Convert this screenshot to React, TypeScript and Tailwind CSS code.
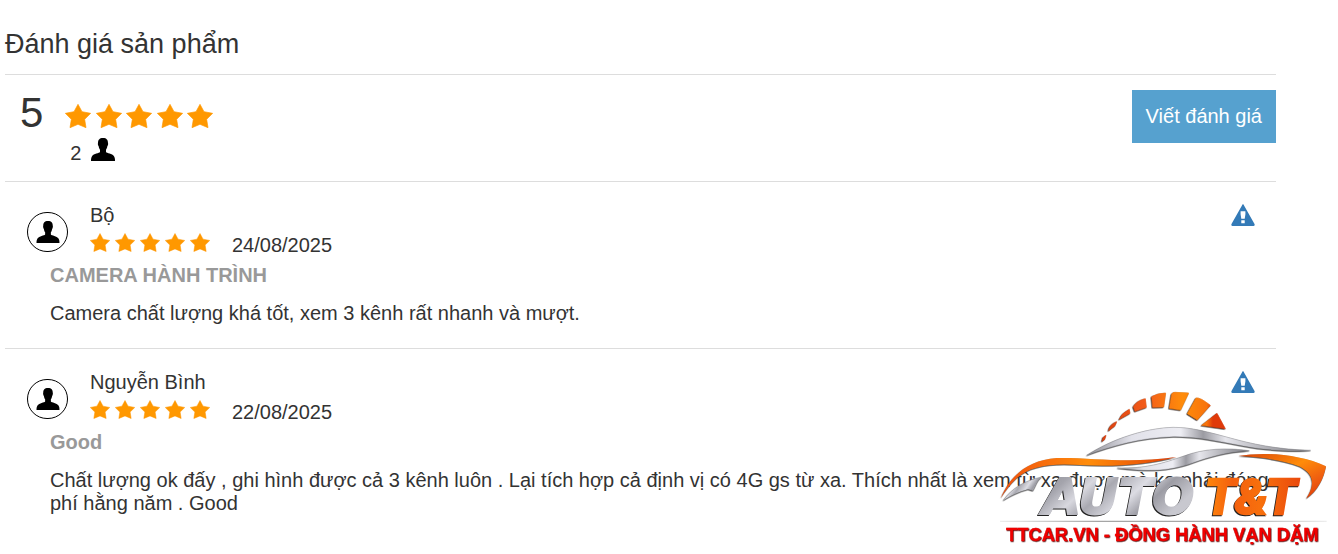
import React from 'react';

interface Review {
  id: number;
  author: string;
  rating: number;
  date: string;
  title: string;
  content: string;
}

const reviews: Review[] = [
  {
    id: 1,
    author: 'Bộ',
    rating: 5,
    date: '24/08/2025',
    title: 'CAMERA HÀNH TRÌNH',
    content: 'Camera chất lượng khá tốt, xem 3 kênh rất nhanh và mượt.',
  },
  {
    id: 2,
    author: 'Nguyễn Bình',
    rating: 5,
    date: '22/08/2025',
    title: 'Good',
    content:
      'Chất lượng ok đấy , ghi hình được cả 3 kênh luôn . Lại tích hợp cả định vị có 4G gs từ xa. Thích nhất là xem từ xa được mà ko phải đóng phí hằng năm . Good',
  },
];

const Star = ({ className }: { className: string }) => (
  <svg viewBox="0 0 78 72" className={className} aria-hidden="true">
    <path
      d="M39 1 L51 23 L77 28 L59 46 L63 71 L39 61 L15 71 L19 46 L1 28 L27 23 Z"
      fill="#ff9800"
      stroke="#ff9800"
      strokeWidth="2"
      strokeLinejoin="round"
    />
  </svg>
);

const Person = ({ className }: { className: string }) => (
  <svg viewBox="0 0 72 69" className={className} aria-hidden="true">
    <path d="M36 0 C25 0 21 6 21 15 C20 17 21 23 23 25 C24 30 25 33 27 35 V42 C25 46 8 46 3 55 C0 60 0 65 0 69 H72 C72 65 72 60 69 55 C64 46 47 46 45 42 V35 C47 33 48 30 49 25 C51 23 52 17 51 15 C51 6 47 0 36 0 Z" />
  </svg>
);

const ReviewItem = ({ review }: { review: Review }) => (
  <article className="border-t border-[#ddd] pt-5 pb-[23px] pl-[22px]">
    <div className="flex items-start pr-[21px]">
      <div className="mt-[10px] flex h-10 w-[41px] shrink-0 items-center justify-center rounded-full border border-black">
        <Person className="h-[22px] w-6" />
      </div>
      <div className="ml-[22px] flex-1">
        <h3 className="text-[20px] leading-[27px]">{review.author}</h3>
        <div className="flex items-center pt-px">
          <div className="mb-[6px] flex gap-[5px]" role="img" aria-label={`${review.rating} sao`}>
            {Array.from({ length: review.rating }, (_, i) => (
              <Star key={i} className="h-[19px] w-5" />
            ))}
          </div>
          <time className="ml-[22px] text-[20px] leading-[30px]">{review.date}</time>
        </div>
      </div>
      <a href="#report" aria-label="Báo cáo vi phạm" className="mt-[2px]">
        <svg viewBox="0 0 70 64" className="h-[22px] w-6" aria-hidden="true">
          <path d="M35 1 Q37 1 38 4 L69 59 Q70 64 66 64 H4 Q0 64 1 59 L32 4 Q33 1 35 1 Z" fill="#337ab7" />
          <path d="M28 21 H42 V30 L40 43 H30 L28 30 Z M30 47 H40 V56 H30 Z" fill="#fff" />
        </svg>
      </a>
    </div>
    <div className="pl-[23px]">
      <h4 className="text-[20px] font-bold leading-[30px] text-[#999]">{review.title}</h4>
      <p className="mt-[12px] text-[20px] leading-[23px]">{review.content}</p>
    </div>
  </article>
);

const AutoLogo = () => (
  <svg
    viewBox="54 48 1002 504"
    className="pointer-events-none absolute right-1.5 bottom-0 h-[168px] w-[334px]"
    role="img"
    aria-label="Auto T&T"
  >
    <defs>
      <linearGradient id="flame" x1="0" y1="0" x2="1" y2="0">
        <stop offset="0" stopColor="#f0500f" />
        <stop offset="0.5" stopColor="#ff8c0a" />
        <stop offset="1" stopColor="#e03c08" />
      </linearGradient>
      <linearGradient id="letters" x1="0" y1="0" x2="1" y2="0">
        <stop offset="0" stopColor="#ff8a0a" />
        <stop offset="0.3" stopColor="#f4600f" />
        <stop offset="0.6" stopColor="#f8700d" />
        <stop offset="1" stopColor="#ea4a0c" />
      </linearGradient>
      <linearGradient id="wing" x1="0" y1="0" x2="1" y2="1">
        <stop offset="0" stopColor="#d94208" />
        <stop offset="0.45" stopColor="#ff8c0a" />
        <stop offset="0.75" stopColor="#ee5a10" />
        <stop offset="1" stopColor="#d93505" />
      </linearGradient>
      <linearGradient id="gauge" gradientUnits="userSpaceOnUse" x1="370" y1="0" x2="735" y2="0">
        <stop offset="0" stopColor="#dd4010" />
        <stop offset="0.35" stopColor="#f25c1a" />
        <stop offset="0.65" stopColor="#ff8c0a" />
        <stop offset="0.85" stopColor="#f8740d" />
        <stop offset="0.9" stopColor="#e03a0a" />
      </linearGradient>
      <linearGradient id="roof" x1="0" y1="0" x2="1" y2="0">
        <stop offset="0" stopColor="#8f8f96" />
        <stop offset="0.2" stopColor="#e2e2ea" />
        <stop offset="0.42" stopColor="#ededf3" />
        <stop offset="0.52" stopColor="#9b9ba2" />
        <stop offset="0.62" stopColor="#e6e6ec" />
        <stop offset="1" stopColor="#77777d" />
      </linearGradient>
      <linearGradient id="steel" x1="0" y1="0" x2="1" y2="0.4">
        <stop offset="0" stopColor="#8e8e95" />
        <stop offset="0.22" stopColor="#a4a4ac" />
        <stop offset="0.38" stopColor="#d8d8df" />
        <stop offset="0.5" stopColor="#a9a9b1" />
        <stop offset="0.68" stopColor="#dcdce3" />
        <stop offset="0.82" stopColor="#9c9ca4" />
        <stop offset="1" stopColor="#c8c8cf" />
      </linearGradient>
      <linearGradient id="ground" x1="0" y1="0" x2="1" y2="0">
        <stop offset="0" stopColor="#ededed" />
        <stop offset="0.3" stopColor="#a5a5a5" />
        <stop offset="0.7" stopColor="#a5a5a5" />
        <stop offset="1" stopColor="#ededed" />
      </linearGradient>
    </defs>

    {/* speedometer ticks */}
    <g fill="url(#gauge)" stroke="url(#gauge)" strokeWidth="2" className="drop-shadow-[-2px_2px_0_#2a1a14]">
      <path d="M366 214 L370 202 L378 196 L374 208 Z" />
      <path d="M386 182 Q388 164 410 155 L405 167 Z" />
      <path d="M418 148 Q424 130 448 118 L450 130 Z" />
      <path d="M460 110 Q470 92 496 86 L499 112 L465 124 Z" />
      <path d="M515 80 Q532 70 557 69 L551 111 L518 112 Z" />
      <path d="M575 72 Q578 66 586 67 L626 69 L602 120 L568 115 Z" />
      <path d="M648 84 Q660 81 691 106 L652 150 L622 131 Z" />
      <path d="M711 130 L736 176 L665 166 Z" />
    </g>

    {/* car outline */}
    <g className="drop-shadow-[-1px_2px_0_#333]">
      <path d="M320 256 C400 205 500 174 580 172 C700 172 780 235 992 241 C940 247 850 240 790 228 C710 212 640 199 580 200 C480 203 400 226 320 256 Z" fill="url(#roof)" stroke="#77777c" />
      <path d="M62 385 C92 315 145 270 230 264 C340 262 440 282 590 261 C510 283 400 292 300 285 C215 279 150 287 110 325 C90 343 75 364 62 385 Z" fill="url(#flame)" />
      <path d="M412 294 C500 296 550 280 612 258 C670 236 740 232 808 242 C740 246 690 260 640 278 C570 304 500 306 412 294 Z" fill="url(#roof)" stroke="#77777c" />
      <path d="M70 391 C96 355 134 331 185 321 C170 333 169 346 159 362 L144 358 C118 365 92 377 70 391 Z" fill="url(#steel)" stroke="#88888d" />
      <path d="M775 258 C850 245 960 252 1038 289 C1032 322 1014 364 978 386 C1006 345 1002 312 960 290 C910 270 840 261 775 258 Z" fill="url(#wing)" />
    </g>

    <g className="font-bold italic drop-shadow-[-3px_3px_0_#222]">
      <text x="188" y="431" fontSize="148" fill="url(#steel)" stroke="url(#steel)" strokeWidth="6" className="font-['DejaVu_Sans',sans-serif]">
        AUTO
      </text>
      <text x="672" y="431" fontSize="144" fill="url(#letters)" stroke="url(#letters)" strokeWidth="8" className="font-['Inter',sans-serif]">
        T&amp;T
      </text>
    </g>
    <path d="M60 452 H1040 V456 H60 Z" fill="url(#ground)" />
    <text
      x="78"
      y="514"
      fontSize="55"
      fill="#f00000"
      stroke="#f00000"
      strokeWidth="1"
      className="font-['Liberation_Sans',sans-serif] font-bold drop-shadow-[2px_2px_0_#400]"
    >
      TTCAR.VN - ĐỒNG HÀNH VẠN DẶM
    </text>
  </svg>
);

const App: React.FC = () => {
  return (
    <main className="relative min-h-screen bg-white font-['Liberation_Sans',Arial,sans-serif] text-[#333]">
      <section className="mr-[62px] ml-[5px] pt-6">
        <h2 className="pb-[10px] text-[27px] leading-[40px]">Đánh giá sản phẩm</h2>

        <div className="flex items-start justify-between border-t border-[#ddd] pt-[15px] pb-4">
          <div className="flex items-start pl-[15px]">
            <span className="text-[42px] leading-[46px]">5</span>
            <div className="ml-[22px]">
              <div className="flex h-[48px] w-[148px] items-center justify-between pt-[3px]" role="img" aria-label="5 sao">
                {[1, 2, 3, 4, 5].map((n) => (
                  <Star key={n} className="h-6 w-[26px]" />
                ))}
              </div>
              <div className="flex items-start pl-[5px]">
                <span className="pt-1 text-[20px] leading-[23px]">{reviews.length}</span>
                <Person className="ml-[10px] h-[23px] w-6" />
              </div>
            </div>
          </div>
          <button type="button" className="h-[53px] bg-[#56a1cf] px-[14px] pb-[2px] text-[20px] text-white">
            Viết đánh giá
          </button>
        </div>

        {reviews.map((review) => (
          <ReviewItem key={review.id} review={review} />
        ))}
      </section>

      <AutoLogo />
    </main>
  );
};

export default App;
